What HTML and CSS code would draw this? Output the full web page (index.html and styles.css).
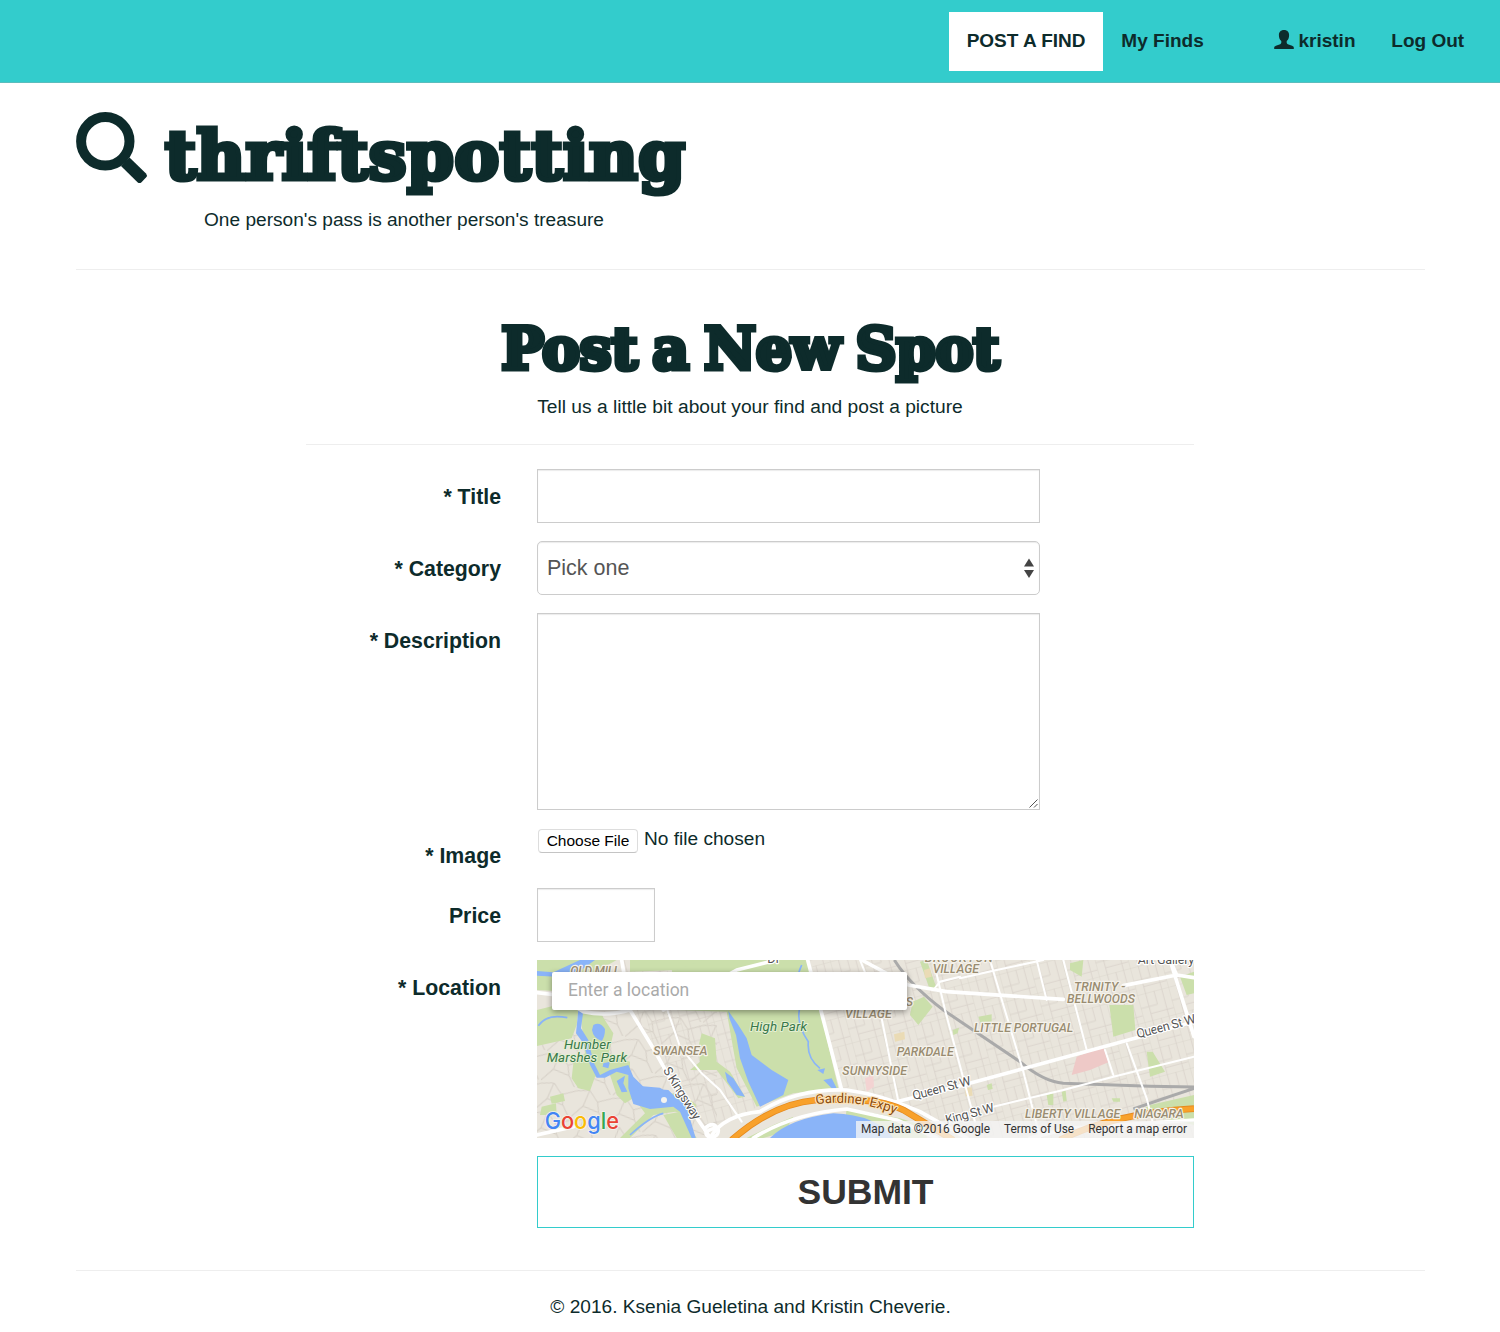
FILE: index.html
```html
<!DOCTYPE html>
<html lang="en">
<head>
<meta charset="utf-8">
<title>thriftspotting</title>
<link rel="stylesheet" href="styles.css">
</head>
<body>
<nav class="navbar">
  <a class="nav-link nav-post">POST A FIND</a>
  <a class="nav-link nav-finds">My Finds</a>
  <a class="nav-link nav-user"><svg class="user-icon" viewBox="0 0 20 19"><path d="M10 0C6.600 0 4.900 2.200 4.900 5.200c0 2.500.9 4.600 2.400 5.900v1.700c0 .7-.4 1.100-1.100 1.400L1.900 15.800C.8 16.300.2 16.800.2 17.700V19h19.600v-1.300c0-.9-.6-1.400-1.700-1.900l-4.300-1.600c-.7-.3-1.100-.7-1.100-1.400v-1.700c1.500-1.300 2.400-3.400 2.400-5.900C15.100 2.200 13.400 0 10 0z"/></svg><span>kristin</span></a>
  <a class="nav-link">Log Out</a>
</nav>
<div class="container">
  <header class="masthead">
    <div class="brand">
      <svg class="search-icon" viewBox="0 0 72 72"><circle cx="29.300" cy="29.300" r="24.200" fill="none" stroke="#0d2b2b" stroke-width="10"/><path d="M45 54 53.500 45.500 70 61.500q1.800 2 0 4l-4.500 4.700q-2 1.800-4 0z" fill="#0d2b2b"/></svg>
      <h1 class="slab brand-name">thriftspotting</h1>
    </div>
    <p class="tagline">One person's pass is another person's treasure</p>
  </header>
  <main class="post">
    <h2 class="slab post-title">Post a New Spot</h2>
    <p class="post-intro">Tell us a little bit about your find and post a picture</p>
    <form class="form">
      <label class="label" for="title">* Title</label>
      <input class="field" id="title" type="text">
      <label class="label" for="category">* Category</label>
      <div class="field select"><span>Pick one</span><svg class="arrows" viewBox="0 0 10 20"><path d="M5 0.500l5 8H0zM0 12h10l-5 8z"/></svg></div>
      <label class="label" for="description">* Description</label>
      <div class="area-wrap">
        <textarea class="field area" id="description"></textarea>
        <svg class="grip" viewBox="0 0 9 9"><path d="M.5 8.500l8-8M5 8.500L8.500 5"/></svg>
      </div>
      <label class="label">* Image</label>
      <div class="file"><span class="file-button">Choose File</span><span class="file-name">No file chosen</span></div>
      <label class="label" for="price">Price</label>
      <input class="field price" id="price" type="text">
      <label class="label">* Location</label>
      <div class="map">
        <svg class="map-canvas" viewBox="21 15 1971 534" preserveAspectRatio="none">
          <defs>
            <pattern id="blocks" width="96" height="84" patternUnits="userSpaceOnUse" patternTransform="rotate(-15)"><path d="M0 0V84M26 0V84M52 0V42M76 0V84M0 0H96M0 42H52M26 64H96" fill="none" stroke="#d9d3ca" stroke-width="2.500"/></pattern>
            <pattern id="lanes" width="110" height="90" patternUnits="userSpaceOnUse" patternTransform="rotate(12)"><path d="M0 10L40 0 70 30 110 10M40 0L30 50 0 90M30 50L80 60 110 100M80 60L70 30" fill="none" stroke="#d6d0c7" stroke-width="3"/></pattern>
            <path id="expy" d="M858 448Q985 430 1104 481"/>
          </defs>
          <rect x="21" y="15" width="1971" height="534" fill="#e9e5dc"/>
          <rect x="21" y="170" width="540" height="379" fill="url(#lanes)"/>
          <path d="M280 15H620L600 190 720 440 520 530 400 330 300 170z" fill="url(#blocks)"/>
          <path d="M840 15H1992V549H1300L1080 430 940 410z" fill="url(#blocks)"/>
          <g fill="#cbdfab">
            <path d="M21 15H260L180 60 120 110 21 105zM21 165L80 150 145 165 140 210 125 250 21 273z"/>
            <path d="M150 165L215 180 250 235 235 300 300 320 300 350 195 365 180 408 145 400 125 370 130 325 165 295z"/>
            <path d="M235 345L290 340 310 430 285 445 260 420zM60 425L100 415 105 438 65 446zM35 455L78 445 80 480 30 480z"/>
            <path d="M320 440L450 410 500 450 480 480 435 470 370 480 300 549H270L345 475z"/>
            <path d="M400 480L450 470 500 549H440zM515 235L555 250 560 320 600 350 645 425 625 430 560 345 480 345 510 320 505 275z"/>
            <path d="M425 40L480 15H835L925 400 790 415 680 455 620 340 590 170 440 165z"/>
            <path d="M300 15L520 15 440 45 300 50z"/>
            <path d="M730 510L790 485 765 530 700 549H650zM950 460L1110 490 1190 515 1190 549H940z"/>
            <path d="M1148 140L1182 125 1208 155 1165 210 1140 180zM1170 20L1190 15 1220 100 1200 105zM1620 25L1660 15 1655 65 1620 45z"/>
            <path d="M1738 150H1810L1816 225 1750 245zM1345 185L1385 178 1385 200 1350 202zM1950 65L1992 50V115L1970 120zM1850 290L1868 290 1905 350 1860 365zM1370 390L1385 385 1388 402 1374 405zM1550 420L1570 415 1570 450 1555 450zM1745 430H1770V440H1750zM1595 410L1607 407 1610 438 1600 440z"/>
            <path d="M1810 480L1860 450 1992 420V510L1900 490zM1268 225L1287 218 1283 235 1270 240z"/>
          </g>
          <g fill="#f3d3d2"><path d="M1005 370L1030 360 1032 395 1010 410z"/><path d="M1625 360L1640 305 1720 275 1735 322 1680 345z" fill="#eec9c7"/></g>
          <g fill="#eadbb5"><path d="M1092 238L1123 230 1125 253 1095 260zM1305 400L1325 397 1328 422 1307 424zM1182 45L1200 40 1205 65 1185 70z"/></g>
          <g fill="#8ab4f8">
            <path d="M21 48L70 52 150 15H195L140 55 80 65 21 62z"/>
            <path d="M145 165L160 168 153 220 175 255 190 320 210 360 240 345 295 330 310 365 345 400 415 405 440 430 468 450 497 549H485L450 470 430 455 360 462 310 447 295 400 295 360 260 350 225 368 200 368 180 330 160 265 138 235z"/>
            <path d="M190 210Q210 198 225 222Q225 245 215 258Q190 250 186 225zM260 378L285 362 280 385 292 410 275 412zM320 392L390 398 425 420 420 445 370 458 335 435zM220 325L240 320 235 340 218 335z"/>
            <path d="M595 168L625 210 650 250 665 300 725 345 775 375 760 420 690 455 655 380 630 310 618 240 598 190z"/>
            <path d="M585 350L610 370 645 425 620 420 592 380zM862 345L885 340 880 357zM880 375L905 370 920 400 905 400 890 385z"/>
            <path d="M720 549Q780 490 910 475 1040 480 1090 549z"/>
          </g>
          <path d="M25 212Q50 175 112 188M300 540Q360 485 400 475M815 30Q800 60 805 90M808 165Q800 210 835 260Q830 310 870 340" fill="none" stroke="#8ab4f8" stroke-width="5"/>
          <circle cx="402" cy="435" r="9" fill="#f5f3ee"/>
          <g fill="none" stroke="#aaa" stroke-width="9"><path d="M1093 15Q1140 90 1240 165L1470 320Q1540 380 1600 385L1860 394 1992 396M1992 400Q1900 430 1810 462"/></g>
          <g fill="none" stroke="#fff" stroke-width="6" stroke-linecap="round">
            <path d="M412 165L450 275 515 355 570 405 635 500M990 15L1050 165 1105 440M1210 15L1245 165 1335 500"/>
            <path d="M1380 15L1420 150 1480 350 1530 549M1600 15L1670 285M1520 15L1550 135M1725 285L1750 360M1790 265L1850 430 1880 549M1290 70L1400 45 1540 15M1390 455L1600 405 1750 365 1992 305M1210 105L1230 80 1290 65"/>
          </g>
          <g fill="none" stroke="#fff" stroke-width="11" stroke-linecap="round" stroke-linejoin="round">
            <path d="M275 15L300 165 370 280 420 370 535 540M21 113L80 120 160 170Q230 185 300 165M833 15L935 405M400 165L620 45 740 15"/>
            <path d="M995 15L1135 90 1250 110 1600 133M1780 92L1940 60 1920 15 1992 245M1940 60L1992 68M1100 440L1300 390 1820 248 1992 200M21 540L130 515"/>
            <path d="M540 549Q580 480 690 470Q800 400 950 405 1060 420 1170 470L1310 549M670 549Q790 475 950 462L1100 495 1220 549"/>
            <path d="M525 520Q550 495 565 525Q565 550 535 545Q515 530 555 520M1500 549L1620 520 1992 495"/>
          </g>
          <g fill="none" stroke="#e58a1f" stroke-width="20"><path d="M605 555Q730 445 860 435 1040 425 1120 465L1270 555M1590 555Q1750 475 1992 461"/></g>
          <g fill="none" stroke="#f8a12b" stroke-width="15"><path d="M605 555Q730 445 860 435 1040 425 1120 465L1270 555M1590 555Q1750 475 1992 461"/></g>
          <g class="map-area">
            <text x="121" y="61" textLength="150">OLD MILL</text>
            <text x="370" y="300" textLength="162">SWANSEA</text>
            <text x="945" y="190" textLength="140">VILLAGE</text>
            <text x="1127" y="153">S</text>
            <text x="1100" y="303" textLength="171">PARKDALE</text>
            <text x="937" y="360" textLength="194">SUNNYSIDE</text>
            <text x="1184" y="20" textLength="204">BROCKTON</text>
            <text x="1208" y="54" textLength="139">VILLAGE</text>
            <text x="1632" y="108" textLength="154">TRINITY -</text>
            <text x="1611" y="143" textLength="204">BELLWOODS</text>
            <text x="1332" y="232" textLength="298">LITTLE PORTUGAL</text>
            <text x="1485" y="488" textLength="286">LIBERTY VILLAGE</text>
            <text x="1813" y="488" textLength="148">NIAGARA</text>
          </g>
          <g class="map-park">
            <text x="102" y="283" textLength="140">Humber</text>
            <text x="50" y="321" textLength="241">Marshes Park</text>
            <text x="660" y="227" textLength="171">High Park</text>
          </g>
          <g class="map-road">
            <text x="712" y="24">Dr</text>
            <text x="1823" y="27" textLength="170">Art Gallery</text>
            <text transform="translate(1823 250) rotate(-15)" textLength="182">Queen St W</text>
            <text transform="translate(1151 435) rotate(-15)" textLength="180">Queen St W</text>
            <text transform="translate(1250 508) rotate(-15)" textLength="150">King St W</text>
            <text transform="translate(398 346) rotate(58)" textLength="178">S Kingsway</text>
            <text class="map-expy"><textPath href="#expy" textLength="242">Gardiner Expy</textPath></text>
          </g>
          <text class="logo" x="44" y="521" textLength="223" lengthAdjust="spacingAndGlyphs"><tspan fill="#4285f4">G</tspan><tspan fill="#ea4335">o</tspan><tspan fill="#fbbc05">o</tspan><tspan fill="#4285f4">g</tspan><tspan fill="#34a853">l</tspan><tspan fill="#ea4335">e</tspan></text>
        </svg>
        <input class="map-search" type="text" placeholder="Enter a location">
        <div class="map-credits"><span>Map data ©2016 Google</span><span>Terms of Use</span><span>Report a map error</span></div>
      </div>
      <button class="submit" type="button">SUBMIT</button>
    </form>
  </main>
  <footer class="footer">© 2016. Ksenia Gueletina and Kristin Cheverie.</footer>
</div>
</body>
</html>
```
FILE: styles.css
```css
* { box-sizing: border-box; }
body {
  margin: 0;
  background: #fff;
  color: #0d2b2b;
  font: 19.100px/27px "Liberation Sans", Arial, sans-serif;
}
h1, h2, p { margin: 0; }
.navbar {
  display: flex;
  justify-content: flex-end;
  height: 83px;
  padding: 12px 18px 0;
  background: #33cccc;
  border-bottom: 1px solid #5bbdbd;
}
.nav-link {
  display: flex;
  height: 59px;
  padding: 0 17.900px;
  font-weight: bold;
  font-size: 19px;
  line-height: 58px;
}
.nav-post { background: #fff; }
.nav-finds { margin-right: 35px; }
.user-icon { width: 20px; height: 19px; margin: 18px 4px 0 0; fill: #0d2b2b; }
.container { padding: 0 75px 0 76px; }
.masthead { height: 187px; padding-top: 29px; border-bottom: 1px solid #eee; }
.brand { display: flex; gap: 17px; height: 94px; }
.search-icon { width: 72px; height: 72px; overflow: visible; }
.slab {
  font-family: "DejaVu Serif", serif;
  font-weight: bold;
  white-space: nowrap;
  -webkit-text-stroke: 5px #0d2b2b;
}
.brand-name { font-size: 67px; line-height: 87px; letter-spacing: .6px; }
.tagline { margin-left: 128px; }
.post { width: 888px; margin-left: 230px; }
.post-title {
  height: 123px;
  padding-top: 41px;
  font-size: 57px;
  line-height: 76px;
  letter-spacing: -.5px;
  word-spacing: -4px;
  text-align: center;
}
.post-intro { height: 52px; border-bottom: 1px solid #eee; font-size: 19.200px; text-align: center; }
.form {
  display: grid;
  grid-template-columns: 195px 657px;
  grid-template-rows: 54px 54px 197px 42px 54px 178px 72px;
  gap: 18px 36px;
  padding: 24px 0 42px;
}
.label {
  height: 42px;
  padding-top: 13px;
  font-size: 21.300px;
  font-weight: bold;
  line-height: 30px;
  text-align: right;
}
.field {
  width: 503px;
  height: 54px;
  padding: 0 9px;
  border: 1px solid #ccc;
  border-radius: 0;
  outline: none;
  background: #fff;
  box-shadow: inset 0 1px 1px rgba(0, 0, 0, .08);
}
.select {
  display: flex;
  align-items: center;
  justify-content: space-between;
  padding-right: 5px;
  border-radius: 5px;
  color: #555;
  font-size: 21.500px;
}
.arrows { width: 10px; height: 20px; fill: #444; }
.area-wrap { position: relative; width: 503px; }
.area { display: block; height: 197px; resize: none; }
.grip { position: absolute; right: 2px; bottom: 2px; width: 9px; height: 9px; fill: none; stroke: #555; }
.file { display: flex; gap: 6px; }
.file-button {
  width: 100px;
  height: 24px;
  margin: 1px 0 0 1px;
  border: 1px solid #ddd;
  border-bottom-color: #c4c4c4;
  border-radius: 4px;
  color: #000;
  font-size: 15.500px;
  line-height: 22px;
  text-align: center;
}
.file-name { line-height: 22px; }
.price { width: 118px; }
.map { position: relative; height: 178px; overflow: hidden; }
.map-canvas { display: block; width: 657px; height: 178px; }
.map-canvas text { font-family: Roboto, sans-serif; font-size: 38px; stroke-linejoin: round; paint-order: stroke; }
.map-area text { fill: #998c71; stroke: #f5f2eb; stroke-width: 7px; font-size: 37px; font-style: italic; font-weight: 500; }
.map-park text { fill: #38784a; stroke: #e4efd2; stroke-width: 6px; font-style: italic; font-size: 40px; }
.map-road text { fill: #555; stroke: #fff; stroke-width: 7px; }
.map-road .map-expy { fill: #8a4b0b; stroke: #fbe3bd; font-size: 40px; }
.map-canvas .logo { font-family: Inter, sans-serif; font-weight: 500; font-size: 67px; stroke: #f5f3ee; stroke-width: 5px; }
.map-search {
  position: absolute;
  top: 12px;
  left: 15px;
  width: 355px;
  height: 38px;
  padding: 0 16px 2px;
  border: 0;
  border-radius: 2px;
  background: #fff;
  box-shadow: 0 2px 6px rgba(0, 0, 0, .4);
  font: 17.500px Roboto, sans-serif;
}
.map-search::placeholder { color: #aaa; }
.map-credits {
  position: absolute;
  right: 0;
  bottom: 0;
  display: flex;
  gap: 14px;
  height: 17px;
  padding: 0 7px 0 5px;
  background: rgba(245, 245, 245, .78);
  color: #333;
  font: 11.850px/17px Roboto, sans-serif;
  white-space: nowrap;
}
.submit {
  grid-column: 2;
  padding: 0;
  border: 1px solid #33cccc;
  background: #fff;
  color: #333;
  font: bold 35.500px "Liberation Sans", Arial, sans-serif;
}
.footer { padding-top: 22px; border-top: 1px solid #eee; text-align: center; }
```
